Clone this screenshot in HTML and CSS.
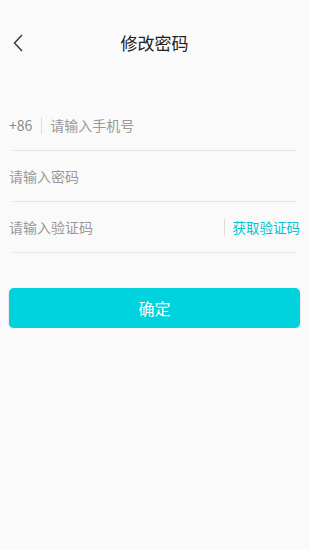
FILE: index.html
```html
<!DOCTYPE html>
<html lang="zh-CN">
<head>
    <meta charset="UTF-8">
    <meta name="viewport" content="width=device-width, initial-scale=1.0">
    <title>修改密码</title>
    <link rel="stylesheet" href="styles.css">
</head>
<body>

<div class="header">
    <span class="back">
        <svg width="10" height="18" viewBox="0 0 10 18">
            <polyline points="9,1 1.5,9 9,17" fill="none" stroke="#333" stroke-width="1.4"/>
        </svg>
    </span>
    <h1>修改密码</h1>
</div>

<div class="form">
    <div class="field">
        <span class="prefix">+86</span>
        <span class="sep"></span>
        <input type="text" placeholder="请输入手机号">
    </div>
    <div class="field">
        <input type="password" placeholder="请输入密码">
    </div>
    <div class="field">
        <input type="text" placeholder="请输入验证码">
        <span class="sep"></span>
        <span class="get-code">获取验证码</span>
    </div>
</div>

<button class="submit-btn">确定</button>

</body>
</html>
```

FILE: styles.css
```css
body {
    font-family: "Noto Sans CJK SC", "Noto Sans", sans-serif;
    background-color: #fafafa;
    margin: 0;
    padding: 0;
}

.header {
    position: relative;
    height: 84px;
    display: flex;
    align-items: center;
    justify-content: center;
}

.back {
    position: absolute;
    left: 13px;
    top: 34px;
}

.back svg {
    display: block;
}

h1 {
    margin: 0;
    font-size: 17px;
    font-weight: normal;
    color: #222;
}

.form {
    margin-top: 16px;
}

.field {
    margin: 0 13px;
    height: 50px;
    border-bottom: 1px solid #e4e4e4;
    display: flex;
    align-items: center;
}

.field > :first-child {
    margin-left: -4px;
}

.prefix {
    font-size: 14px;
    color: #8a8a8a;
}

.sep {
    width: 1px;
    height: 17px;
    background-color: #dcdcdc;
    margin: 0 8px 0 9px;
}

.field input {
    flex: 1;
    min-width: 0;
    border: none;
    outline: none;
    background: transparent;
    padding: 0;
    font-family: inherit;
    font-size: 14px;
    color: #333;
}

.field input::placeholder {
    color: #999;
}

.get-code {
    margin-right: -4px;
    font-size: 13.5px;
    color: #00c4d4;
}

.submit-btn {
    display: block;
    width: calc(100% - 18px);
    margin: 35px 9px 0;
    height: 40px;
    border: none;
    border-radius: 5px;
    background-color: #00d2de;
    color: #fff;
    font-family: inherit;
    font-size: 16px;
    box-shadow: 0 1px 2px rgba(0, 0, 0, 0.2);
    cursor: pointer;
}
```
